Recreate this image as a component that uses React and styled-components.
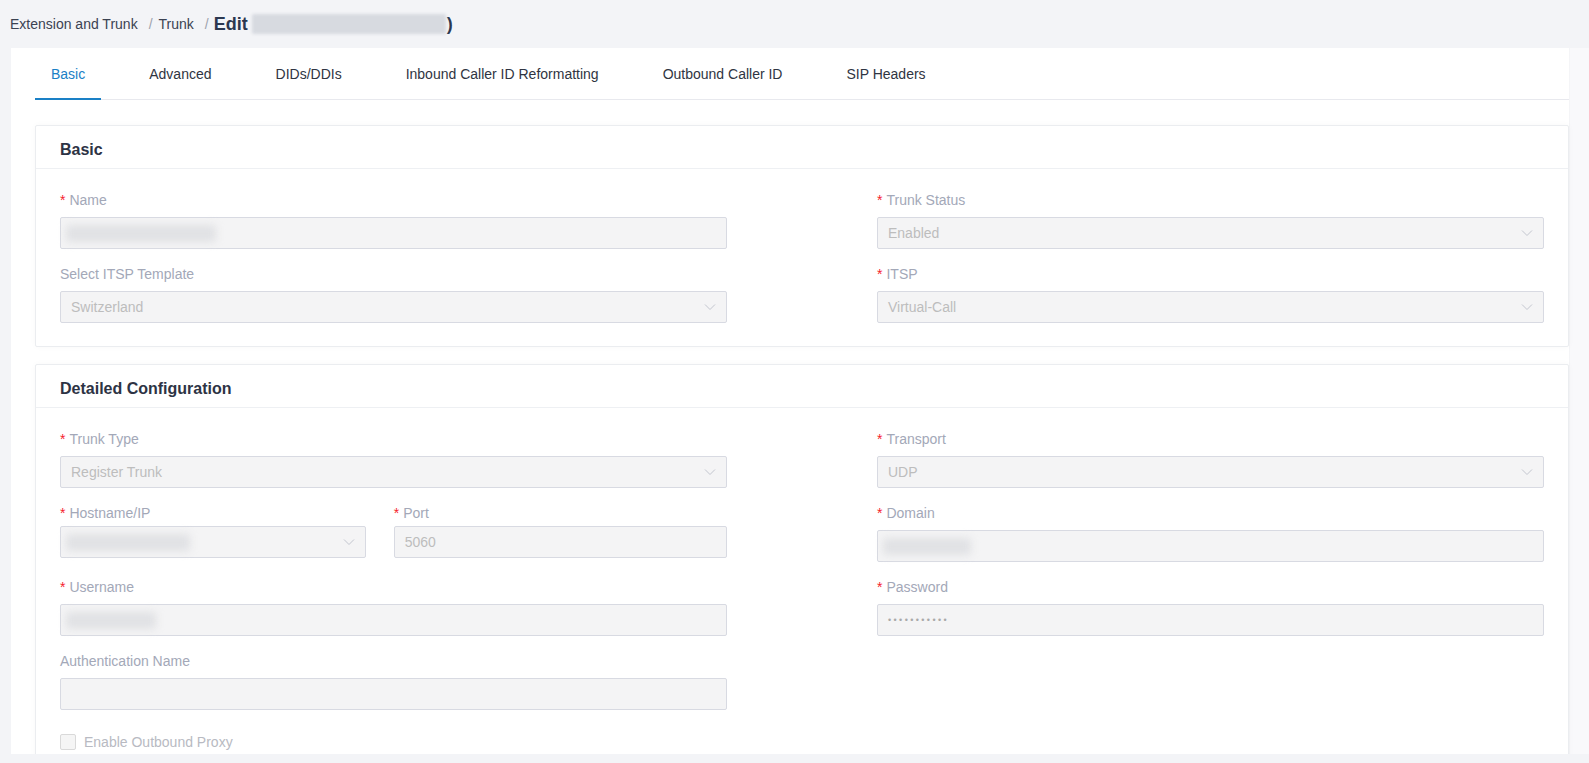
import React from 'react'
import styled, { createGlobalStyle } from 'styled-components'

const GlobalStyle = createGlobalStyle`
    html, body {
        margin: 0;
        padding: 0;
    }
    body {
        background: #f3f4f7;
        font-family: "Liberation Sans", Arial, sans-serif;
    }
    * {
        box-sizing: border-box;
    }
`

const Page = styled.div`
    height: 100vh;
    display: flex;
    flex-direction: column;
    padding-bottom: 9px;
    overflow: hidden;
`
const Crumbs = styled.div`
    height: 48px;
    flex: none;
    display: flex;
    align-items: center;
    padding-left: 10px;
    font-size: 14px;
    color: #3b4252;
`
const Sep = styled.span`
    margin: 0 6px 0 11px;
    color: #9ea3ad;
`
const PageTitle = styled.span`
    display: flex;
    align-items: center;
    margin-left: -1px;
    font-size: 18px;
    font-weight: 700;
    color: #2c3850;
`
const TitleBlur = styled.span`
    width: 194px;
    height: 20px;
    margin: 0 1px 0 4px;
    background: #d7dae0;
    filter: blur(1.5px);
    border-radius: 2px;
`
const Panel = styled.div`
    flex: 1;
    min-height: 0;
    margin-left: 11px;
    padding: 0 20px 0 24px;
    background: linear-gradient(to right, #fff calc(100% - 20px), #eff0f3 calc(100% - 20px), #f9f9fb calc(100% - 19px));
    overflow: hidden;
`
const TabBar = styled.div`
    height: 52px;
    display: flex;
    gap: 32px;
    border-bottom: 1px solid #e8e9ee;
`
const Tab = styled.div`
    position: relative;
    display: flex;
    align-items: center;
    padding: 0 16px;
    font-size: 14px;
    color: ${({ active }) => (active ? '#1a80c6' : '#2f3542')};
    &::after {
        content: '';
        display: ${({ active }) => (active ? 'block' : 'none')};
        position: absolute;
        left: 0;
        right: 0;
        bottom: -1px;
        height: 2px;
        background: #1a80c6;
    }
`
const Content = styled.div`
    padding-top: 25px;
`
const Card = styled.section`
    margin-bottom: 17px;
    background: #fff;
    border: 1px solid #ebedf0;
    border-radius: 2px;
    box-shadow: 0 0 6px rgba(30, 40, 70, 0.03);
`
const CardHeader = styled.h3`
    margin: 0;
    height: 43px;
    display: flex;
    align-items: center;
    padding: 5px 24px 0;
    border-bottom: 1px solid #eef0f3;
    font-size: 16px;
    font-weight: 700;
    color: #2d3344;
`
const CardBody = styled.div`
    display: grid;
    grid-template-columns: 1fr 1fr;
    column-gap: 150px;
    padding: 20px 24px 9px;
`
const Item = styled.div`
    margin-bottom: 14px;
    width: ${({ w }) => w || 'auto'};
    padding-left: ${({ pl }) => pl || 0}px;
    flex: ${({ grow }) => (grow ? 1 : 'none')};
`
const SplitRow = styled.div`
    display: flex;
`
const Label = styled.div`
    height: 22px;
    line-height: 22px;
    margin-bottom: ${({ tight }) => (tight ? 2 : 6)}px;
    font-size: 14px;
    color: #a3a8b8;
`
const Star = styled.span`
    color: #f5222d;
    margin-right: 4px;
`
const Field = styled.div`
    height: 32px;
    display: flex;
    align-items: center;
    padding: 0 10px;
    background: #f4f4f5;
    border: 1px solid #d8dae2;
    border-radius: 2px;
    font-size: 14px;
    color: #bdbdbd;
`
const Blur = styled.span`
    width: ${({ w }) => w}px;
    height: 17px;
    margin-left: -5px;
    background: #e0e1e4;
    filter: blur(4px);
    border-radius: 3px;
`
const Dots = styled.span`
    font-size: 9px;
    letter-spacing: 2.4px;
    color: #a9a9a9;
`
const Chevron = styled.svg`
    margin-left: auto;
    flex: none;
`
const CheckRow = styled.label`
    grid-column: 1 / -1;
    display: flex;
    align-items: center;
    height: 22px;
    margin-top: 7px;
    font-size: 14px;
    color: #b8bac2;
`
const Box = styled.span`
    width: 16px;
    height: 16px;
    margin-right: 8px;
    background: #f5f5f5;
    border: 1px solid #d9d9d9;
    border-radius: 2px;
`

const Arrow = () => (
    <Chevron width="12" height="12" viewBox="0 0 12 12">
        <polyline points="1,3.5 6,8.5 11,3.5" fill="none" stroke="#c3c6cf" strokeWidth="1" />
    </Chevron>
)

const FormItem = ({ label, req, tight, select, children, ...rest }) => (
    <Item {...rest}>
        <Label tight={tight}>
            {req && <Star>*</Star>}
            {label}
        </Label>
        <Field>
            {children}
            {select && <Arrow />}
        </Field>
    </Item>
)

const tabs = ['Basic', 'Advanced', 'DIDs/DDIs', 'Inbound Caller ID Reformatting', 'Outbound Caller ID', 'SIP Headers']

export default function App() {
    return (
        <Page>
            <GlobalStyle />
            <Crumbs>
                <span>Extension and Trunk</span>
                <Sep>/</Sep>
                <span>Trunk</span>
                <Sep>/</Sep>
                <PageTitle>
                    Edit <TitleBlur />)
                </PageTitle>
            </Crumbs>
            <Panel>
                <TabBar>
                    {tabs.map((t, i) => (
                        <Tab key={t} active={i === 0}>{t}</Tab>
                    ))}
                </TabBar>
                <Content>
                    <Card>
                        <CardHeader>Basic</CardHeader>
                        <CardBody>
                            <FormItem label="Name" req><Blur w={150} /></FormItem>
                            <FormItem label="Trunk Status" req select>Enabled</FormItem>
                            <FormItem label="Select ITSP Template" select>Switzerland</FormItem>
                            <FormItem label="ITSP" req select>Virtual-Call</FormItem>
                        </CardBody>
                    </Card>
                    <Card>
                        <CardHeader>Detailed Configuration</CardHeader>
                        <CardBody>
                            <FormItem label="Trunk Type" req select>Register Trunk</FormItem>
                            <FormItem label="Transport" req select>UDP</FormItem>
                            <SplitRow>
                                <FormItem label="Hostname/IP" req tight select w="45.8333%"><Blur w={124} /></FormItem>
                                <FormItem label="Port" req tight grow pl={28}>5060</FormItem>
                            </SplitRow>
                            <FormItem label="Domain" req><Blur w={88} /></FormItem>
                            <FormItem label="Username" req><Blur w={90} /></FormItem>
                            <FormItem label="Password" req><Dots>•••••••••••</Dots></FormItem>
                            <FormItem label="Authentication Name" />
                            <div />
                            <CheckRow>
                                <Box />
                                Enable Outbound Proxy
                            </CheckRow>
                        </CardBody>
                    </Card>
                </Content>
            </Panel>
        </Page>
    )
}
